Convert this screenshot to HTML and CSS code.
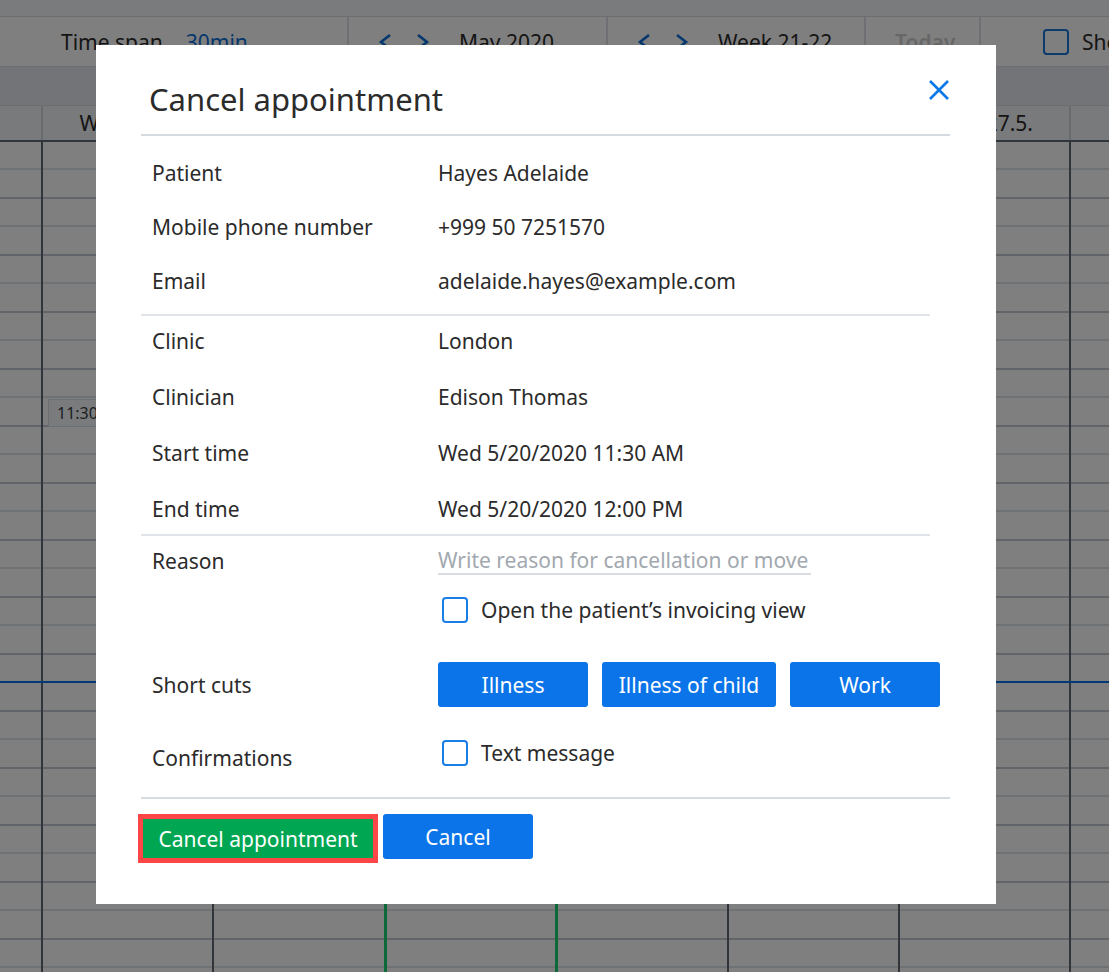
FILE: index.html
```html
<!DOCTYPE html>
<html lang="en">
<head>
  <meta charset="UTF-8">
  <meta name="viewport" content="width=device-width, initial-scale=1">
  <title>Calendar - Cancel appointment</title>
  <link rel="stylesheet" href="styles.css">
</head>
<body>

  <div class="calendar">
    <div class="topstrip"></div>

    <div class="toolbar">
      <div class="tool tool-span">
        <span>Time span</span>
        <span class="link">30min</span>
      </div>
      <div class="tool tool-nav">
        <svg class="chev" viewBox="0 0 14 18"><polyline points="12,2 3,9 12,16"/></svg>
        <svg class="chev" viewBox="0 0 14 18"><polyline points="2,2 11,9 2,16"/></svg>
        <span class="nav-label">May 2020</span>
      </div>
      <div class="tool tool-nav tool-week">
        <svg class="chev" viewBox="0 0 14 18"><polyline points="12,2 3,9 12,16"/></svg>
        <svg class="chev" viewBox="0 0 14 18"><polyline points="2,2 11,9 2,16"/></svg>
        <span class="nav-label">Week 21-22</span>
      </div>
      <div class="tool tool-today">Today</div>
      <div class="tool tool-show">
        <span class="box"></span>
        <span>Show weekends</span>
      </div>
    </div>

    <div class="band"></div>

    <div class="day-head">
      <div class="head-cell"></div>
      <div class="head-cell">Wed 20.5.</div>
      <div class="head-cell"></div>
      <div class="head-cell"></div>
      <div class="head-cell"></div>
      <div class="head-cell"></div>
      <div class="head-cell">Wed 27.5.</div>
      <div class="head-cell"></div>
    </div>

    <div class="grid">
      <div class="col col-time"></div>
      <div class="col">
        <div class="event">11:30</div>
      </div>
      <div class="col"></div>
      <div class="col col-green"></div>
      <div class="col col-green"></div>
      <div class="col"></div>
      <div class="col"></div>
      <div class="col"></div>
      <div class="now-line"></div>
    </div>
  </div>

  <div class="overlay">
    <div class="modal">
      <div class="modal-head">
        <h2>Cancel appointment</h2>
        <button class="close" aria-label="Close">
          <svg viewBox="0 0 22 22"><path d="M2 2 L20 20 M20 2 L2 20"/></svg>
        </button>
      </div>

      <div class="section section-patient">
        <div class="row"><span class="label">Patient</span><span class="value">Hayes Adelaide</span></div>
        <div class="row"><span class="label">Mobile phone number</span><span class="value">+999 50 7251570</span></div>
        <div class="row"><span class="label">Email</span><span class="value">adelaide.hayes@example.com</span></div>
      </div>

      <div class="section section-visit">
        <div class="row"><span class="label">Clinic</span><span class="value">London</span></div>
        <div class="row"><span class="label">Clinician</span><span class="value">Edison Thomas</span></div>
        <div class="row"><span class="label">Start time</span><span class="value">Wed 5/20/2020 11:30 AM</span></div>
        <div class="row"><span class="label">End time</span><span class="value">Wed 5/20/2020 12:00 PM</span></div>
      </div>

      <div class="section section-form">
        <div class="row">
          <label class="label" for="reason">Reason</label>
          <input type="text" id="reason" placeholder="Write reason for cancellation or move">
        </div>
        <div class="row row-check">
          <span class="label"></span>
          <label class="check"><input type="checkbox"><span class="box"></span>Open the patient’s invoicing view</label>
        </div>
        <div class="row row-shortcuts">
          <span class="label">Short cuts</span>
          <div class="shortcuts">
            <button class="btn btn-blue btn-short">Illness</button>
            <button class="btn btn-blue btn-child">Illness of child</button>
            <button class="btn btn-blue btn-short">Work</button>
          </div>
        </div>
        <div class="row row-confirm">
          <span class="label">Confirmations</span>
          <label class="check"><input type="checkbox"><span class="box"></span>Text message</label>
        </div>
      </div>

      <div class="modal-foot">
        <button class="btn btn-green">Cancel appointment</button>
        <button class="btn btn-blue btn-cancel">Cancel</button>
      </div>
    </div>
  </div>

</body>
</html>
```

FILE: styles.css
```css
/* Global Styles */
* {
  box-sizing: border-box;
}

html, body {
  margin: 0;
  height: 100%;
}

body {
  font-family: "Noto Sans", "Open Sans", sans-serif;
  font-size: 21px;
  color: #2b2b2b;
  background-color: #fff;
  overflow: hidden;
}

/* Calendar behind the dialog */
.calendar {
  display: flex;
  flex-direction: column;
  height: 100vh;
}

.topstrip {
  height: 17px;
  background-color: #f4f6fa;
  border-bottom: 1px solid #d6dbe1;
}

.toolbar {
  display: flex;
  height: 49px;
  background-color: #fff;
  overflow: hidden;
}

.tool {
  flex-shrink: 0;
  display: flex;
  align-items: center;
  padding-left: 29px;
  border-right: 2px solid #dde1e6;
  white-space: nowrap;
}

.tool-span {
  width: 349px;
  padding-left: 61px;
  gap: 23px;
}

.tool-nav {
  width: 259px;
}

.tool-week {
  width: 258px;
}

.tool-today {
  width: 115px;
  color: #cfcfcf;
  font-weight: 600;
}

.tool-show {
  border-right: none;
  padding-left: 62px;
  gap: 13px;
}

.link {
  color: #0a6fd8;
}

.chev {
  width: 14px;
  height: 18px;
  margin-right: 24px;
  fill: none;
  stroke: #0a6fd8;
  stroke-width: 2.6;
}

.nav-label {
  margin-left: 5px;
}

.tool-show .box {
  width: 26px;
  height: 26px;
  border: 2px solid #1b78d8;
  border-radius: 4px;
}

.band {
  height: 39px;
  background-color: #e6e8ee;
  border-top: 1px solid #d6dbe1;
}

.day-head {
  display: grid;
  grid-template-columns: 41px repeat(7, 171.4px);
  height: 37px;
  background-color: #f2f4f8;
  border-top: 1px solid #d6dbe1;
  border-bottom: 2px solid #5f6a74;
}

.head-cell {
  display: flex;
  align-items: center;
  justify-content: center;
  border-left: 2px solid #d3d8de;
}

.head-cell:first-child {
  border-left: none;
}

.grid {
  position: relative;
  flex: 1;
  display: grid;
  grid-template-columns: 41px repeat(7, 171.4px);
}

.col {
  position: relative;
  border-left: 2px solid #5f6a74;
  background-image: linear-gradient(to bottom,
    transparent 0, transparent 26.5px,
    #dfe4ea 26.5px, #dfe4ea 28.5px,
    transparent 28.5px, transparent 55px,
    #c3cad2 55px, #c3cad2 57px);
  background-size: 100% 57px;
}

.col-time {
  border-left: none;
}

.col-green {
  border-left: 3px solid #18d273;
}

.event {
  position: absolute;
  top: 257px;
  left: 5px;
  width: 120px;
  height: 28px;
  padding-left: 8px;
  font-size: 16px;
  line-height: 27px;
  color: #3a3f45;
  background-color: #f4f7fb;
  border: 1px solid #d8dee5;
}

.now-line {
  position: absolute;
  top: 539px;
  left: 0;
  right: 0;
  height: 2px;
  background-color: #0073e6;
}

/* Dialog */
.overlay {
  position: fixed;
  inset: 0;
  display: flex;
  align-items: flex-start;
  padding: 45px 0 0 96px;
  background-color: rgba(0, 0, 0, 0.5);
}

.modal {
  width: 900px;
  height: 859px;
  padding: 0 46px 0 45px;
  background-color: #fff;
}

.modal-head {
  display: flex;
  justify-content: space-between;
  align-items: flex-start;
  height: 91px;
  border-bottom: 2px solid #d5dbe0;
}

.modal-head h2 {
  margin: 33px 0 0 8px;
  font-size: 31px;
  font-weight: 400;
  line-height: 43px;
  color: #2b2b2b;
}

.close {
  margin-top: 34px;
  padding: 0;
  width: 22px;
  height: 22px;
  background: none;
  border: none;
  cursor: pointer;
}

.close svg {
  display: block;
  width: 22px;
  height: 22px;
  fill: none;
  stroke: #0a78e8;
  stroke-width: 2.6;
}

.section {
  display: grid;
  margin-right: 20px;
  padding-left: 11px;
  border-bottom: 2px solid #e1e5e9;
}

.row {
  display: grid;
  grid-template-columns: 286px auto;
  align-items: center;
  height: 50px;
}

.section-patient {
  row-gap: 4px;
  padding-top: 12px;
  padding-bottom: 8px;
}

.section-visit {
  row-gap: 6px;
}

.section-form {
  margin-right: 0;
  padding-bottom: 14px;
  border-bottom: 2px solid #d5dbe0;
}

.label {
  display: block;
}

#reason {
  width: 373px;
  height: 28px;
  padding: 0;
  font-family: inherit;
  font-size: 21px;
  color: #2b2b2b;
  border: none;
  border-bottom: 2px solid #d9dde2;
  outline: none;
}

#reason::placeholder {
  color: #a2a8af;
}

.row-check {
  height: 48px;
}

.check {
  display: flex;
  align-items: center;
  gap: 13px;
  padding-left: 4px;
}

.check input {
  display: none;
}

.check .box {
  width: 26px;
  height: 26px;
  border: 2px solid #1b7de6;
  border-radius: 4px;
}

.row-shortcuts {
  height: 45px;
  margin-top: 28px;
}

.shortcuts {
  display: flex;
  gap: 14px;
}

.btn {
  height: 45px;
  padding: 0;
  font-family: inherit;
  font-size: 21px;
  color: #fff;
  border: none;
  border-radius: 3px;
  cursor: pointer;
}

.btn-blue {
  background-color: #0a74e8;
}

.btn-short {
  width: 150px;
}

.btn-child {
  width: 174px;
}

.row-confirm {
  align-items: start;
  margin-top: 26px;
}

.row-confirm .label {
  line-height: 50px;
}

.row-confirm .check {
  height: 40px;
}

.modal-foot {
  display: flex;
  align-items: flex-start;
  gap: 5px;
  padding-top: 15px;
}

.btn-green {
  width: 240px;
  height: 49px;
  margin-left: -3px;
  background-color: #00a651;
  border: 5px solid #ff4646;
  border-radius: 0;
}

.btn-cancel {
  width: 150px;
}
```
